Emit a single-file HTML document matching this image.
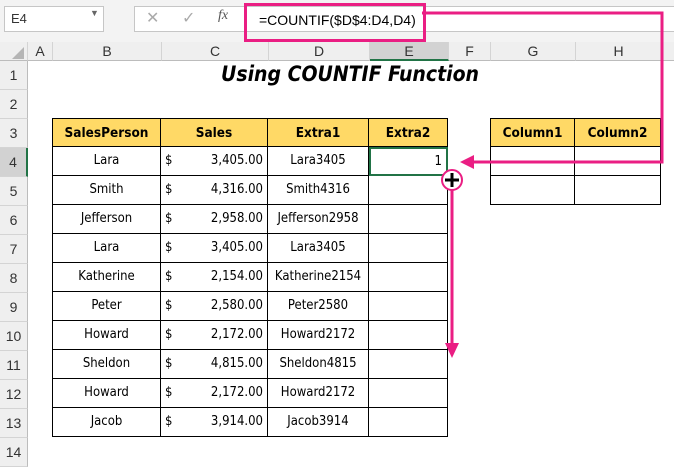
<html><head><style>
body{margin:0;width:674px;height:470px;background:#fff;font-family:"Liberation Sans",sans-serif;position:relative;overflow:hidden}
.a{position:absolute}
.r{position:absolute;display:flex;height:29px;font-family:"DejaVu Sans Condensed","Liberation Sans",sans-serif;font-size:13px}
.r div{box-sizing:border-box;height:29px;border-right:1px solid #000;border-bottom:1px solid #000;line-height:28px;text-align:center;padding:0 4px;white-space:nowrap}
.r div:first-child{border-left:1px solid #000}
.h div{background:#ffd966;font-weight:bold;border-top:1px solid #000;font-size:13.5px}
.w1{width:109px}.w2{width:107px;text-align:left!important}.w3{width:101px}.w4{width:79px;text-align:right!important}
.w2 span{float:right}
.hdr{position:absolute;top:42px;height:18px;background:#efefef;border-right:1px solid #d4d4d4;border-bottom:1px solid #bcbcbc;text-align:center;font-size:14px;color:#333;line-height:18px}
.rh{position:absolute;left:0;width:27px;background:#efefef;border-bottom:1px solid #d4d4d4;border-right:1px solid #bcbcbc;text-align:center;font-size:14px;color:#333;line-height:29px;height:28px}
</style></head><body>
<div class="a" style="left:0;top:0;width:674px;height:42px;background:#f3f3f3"></div>
<div class="a" style="left:4px;top:6px;width:98px;height:24px;background:#fff;border:1px solid #c6c6c6;font-size:13px;line-height:24px;text-indent:6px;color:#333">E4</div>
<div class="a" style="left:90px;top:8px;font-size:9px;color:#666">▼</div>
<div class="a" style="left:134px;top:6px;width:540px;height:24px;background:#fff;border:1px solid #c6c6c6"></div>
<div class="a" style="left:146px;top:8px;font-size:16px;color:#aaa">✕</div>
<div class="a" style="left:182px;top:8px;font-size:16px;color:#aaa">✓</div>
<div class="a" style="left:218px;top:8px;font-size:14px;font-style:italic;font-family:'Liberation Serif';color:#555">fx</div>
<div class="a" style="left:244px;top:3px;width:176px;height:33px;border:3px solid #ea1e83"></div>
<div class="a" style="left:259px;top:12px;font-size:14px;color:#000">=COUNTIF($D$4:D4,D4)</div>
<div class="hdr" style="left:0;width:27px"></div>
<div class="a" style="left:12px;top:47px;width:0;height:0;border-left:12px solid transparent;border-bottom:12px solid #b5b5b5"></div>
<div class="hdr" style="left:28px;width:24px">A</div>
<div class="hdr" style="left:53px;width:108px">B</div>
<div class="hdr" style="left:162px;width:106px">C</div>
<div class="hdr" style="left:269px;width:100px">D</div>
<div class="hdr" style="left:370px;width:78px;background:#d2d2d2;border-bottom:2px solid #217346;height:17px">E</div>
<div class="hdr" style="left:449px;width:41px">F</div>
<div class="hdr" style="left:491px;width:84px">G</div>
<div class="hdr" style="left:576px;width:85px">H</div>
<div class="hdr" style="left:662px;width:12px"></div>
<div class="rh" style="top:61px">1</div><div class="rh" style="top:90px">2</div><div class="rh" style="top:119px">3</div>
<div class="rh" style="top:148px;background:#d2d2d2;border-right:2px solid #217346;width:26px">4</div>
<div class="rh" style="top:177px">5</div><div class="rh" style="top:206px">6</div><div class="rh" style="top:235px">7</div><div class="rh" style="top:264px">8</div><div class="rh" style="top:293px">9</div><div class="rh" style="top:322px">10</div><div class="rh" style="top:351px">11</div><div class="rh" style="top:380px">12</div><div class="rh" style="top:409px">13</div><div class="rh" style="top:438px">14</div>
<div class="a" style="left:160px;top:62px;width:380px;text-align:center;font-size:21px;font-weight:bold;font-style:italic;font-family:'DejaVu Sans Condensed',sans-serif">Using COUNTIF Function</div>
<div class="r h" style="left:52px;top:118px"><div class="w1">SalesPerson</div><div class="w2" style="text-align:center!important">Sales</div><div class="w3">Extra1</div><div class="w4" style="text-align:center!important">Extra2</div></div>
<div class="r" style="left:52px;top:147px"><div class="w1">Lara</div><div class="w2">$<span>3,405.00</span></div><div class="w3">Lara3405</div><div class="w4" style="border:2px solid #217346;line-height:25px">1</div></div>
<div class="r" style="left:52px;top:176px"><div class="w1">Smith</div><div class="w2">$<span>4,316.00</span></div><div class="w3">Smith4316</div><div class="w4"></div></div>
<div class="r" style="left:52px;top:205px"><div class="w1">Jefferson</div><div class="w2">$<span>2,958.00</span></div><div class="w3">Jefferson2958</div><div class="w4"></div></div>
<div class="r" style="left:52px;top:234px"><div class="w1">Lara</div><div class="w2">$<span>3,405.00</span></div><div class="w3">Lara3405</div><div class="w4"></div></div>
<div class="r" style="left:52px;top:263px"><div class="w1">Katherine</div><div class="w2">$<span>2,154.00</span></div><div class="w3">Katherine2154</div><div class="w4"></div></div>
<div class="r" style="left:52px;top:292px"><div class="w1">Peter</div><div class="w2">$<span>2,580.00</span></div><div class="w3">Peter2580</div><div class="w4"></div></div>
<div class="r" style="left:52px;top:321px"><div class="w1">Howard</div><div class="w2">$<span>2,172.00</span></div><div class="w3">Howard2172</div><div class="w4"></div></div>
<div class="r" style="left:52px;top:350px"><div class="w1">Sheldon</div><div class="w2">$<span>4,815.00</span></div><div class="w3">Sheldon4815</div><div class="w4"></div></div>
<div class="r" style="left:52px;top:379px"><div class="w1">Howard</div><div class="w2">$<span>2,172.00</span></div><div class="w3">Howard2172</div><div class="w4"></div></div>
<div class="r" style="left:52px;top:408px"><div class="w1">Jacob</div><div class="w2">$<span>3,914.00</span></div><div class="w3">Jacob3914</div><div class="w4"></div></div>
<div class="r h" style="left:490px;top:118px"><div style="width:85px">Column1</div><div style="width:86px">Column2</div></div>
<div class="r" style="left:490px;top:147px"><div style="width:85px"></div><div style="width:86px"></div></div>
<div class="r" style="left:490px;top:176px"><div style="width:85px"></div><div style="width:86px"></div></div>
<svg class="a" style="left:0;top:0" width="674" height="470">
<polyline points="422,13 662,13 662,162 470,162" fill="none" stroke="#ea1e83" stroke-width="3"/>
<polygon points="460,162 474,155 474,169" fill="#ea1e83"/>
<line x1="452" y1="188" x2="452" y2="345" stroke="#ea1e83" stroke-width="3"/>
<polygon points="452,358 445,343 459,343" fill="#ea1e83"/>
<circle cx="452" cy="180" r="10" fill="#fff" stroke="#ea1e83" stroke-width="2"/>
<path d="M452 173v14M445 180h14" stroke="#000" stroke-width="3"/>
</svg>
</body></html>
